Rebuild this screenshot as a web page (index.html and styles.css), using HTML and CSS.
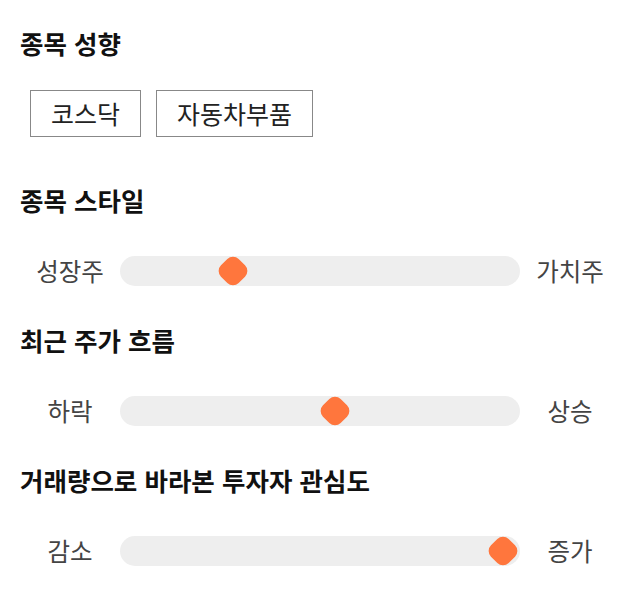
FILE: index.html
```html
<!DOCTYPE html>
<html lang="ko">

<head>
    <meta charset="UTF-8">
    <meta name="viewport" content="width=device-width, initial-scale=1.0">
    <title>종목 분석</title>
    <link rel="stylesheet" href="styles.css">
</head>

<body>
    <div class="container">
        <!-- 종목 성향 -->
        <section class="section">
            <h2 class="title">종목 성향</h2>
            <div class="tags">
                <span class="tag">코스닥</span>
                <span class="tag">자동차부품</span>
            </div>
        </section>

        <!-- 슬라이더 -->
        <section class="section section-slider first">
            <h2 class="title">종목 스타일</h2>
            <div class="slider-row">
                <span class="label">성장주</span>
                <div class="track">
                    <span class="thumb" style="--value: 0.265"></span>
                </div>
                <span class="label">가치주</span>
            </div>
        </section>

        <section class="section section-slider">
            <h2 class="title">최근 주가 흐름</h2>
            <div class="slider-row">
                <span class="label">하락</span>
                <div class="track">
                    <span class="thumb" style="--value: 0.54"></span>
                </div>
                <span class="label">상승</span>
            </div>
        </section>

        <section class="section section-slider">
            <h2 class="title">거래량으로 바라본 투자자 관심도</h2>
            <div class="slider-row">
                <span class="label">감소</span>
                <div class="track">
                    <span class="thumb" style="--value: 0.995"></span>
                </div>
                <span class="label">증가</span>
            </div>
        </section>
    </div>
</body>

</html>
```

FILE: styles.css
```css
body {
    margin: 0;
    padding: 0;
    background-color: #ffffff;
    font-family: "Noto Sans CJK KR", "Noto Sans", sans-serif;
    color: #111111;
}

.container {
    padding: 27px 20px 0 20px;
}

.title {
    margin: 0;
    font-size: 25.5px;
    font-weight: bold;
    line-height: 32px;
    color: #111111;
}

/* 종목 성향 태그 */
.tags {
    display: flex;
    gap: 15px;
    margin-top: 31px;
    padding-left: 10px;
}

.tag {
    display: inline-block;
    padding: 6px 20px;
    font-size: 25px;
    line-height: 33px;
    border: 1px solid #888888;
    color: #222222;
}

/* 슬라이더 */
.section-slider {
    margin-top: 38px;
}

.section-slider.first {
    margin-top: 47px;
}

.slider-row {
    display: flex;
    align-items: center;
    margin-top: 40px;
}

.label {
    width: 100px;
    text-align: center;
    font-size: 24.5px;
    line-height: 30px;
    color: #444444;
}

.track {
    position: relative;
    flex: 1;
    height: 30px;
    background-color: #eeeeee;
    border-radius: 15px;
}

.thumb {
    position: absolute;
    top: 50%;
    left: calc(15px + var(--value) * (100% - 30px));
    width: 25px;
    height: 25px;
    background-color: #ff763d;
    border-radius: 8px;
    transform: translate(-50%, -50%) rotate(45deg);
}
```
